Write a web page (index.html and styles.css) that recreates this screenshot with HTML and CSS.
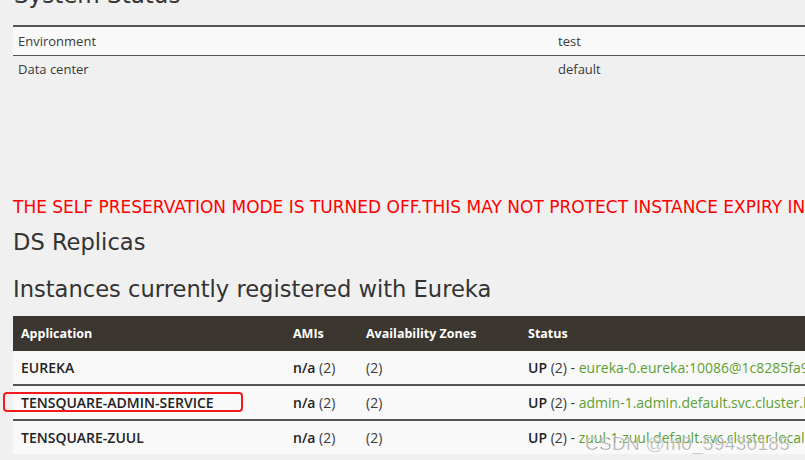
FILE: index.html
```html
<!DOCTYPE html>
<html lang="en">
<head>
  <meta charset="UTF-8" />
  <title>Eureka</title>
  <link rel="stylesheet" href="styles.css">
</head>
<body>

  <h1 class="page-title">System Status</h1>
  <table class="status-table">
    <tr class="odd"><td>Environment</td><td>test</td></tr>
    <tr><td>Data center</td><td>default</td></tr>
  </table>

  <h4 class="warning">THE SELF PRESERVATION MODE IS TURNED OFF.THIS MAY NOT PROTECT INSTANCE EXPIRY IN CASE OF NETWORK/OTHER PROBLEMS.</h4>

  <h1 class="section-title replicas">DS Replicas</h1>
  <h1 class="section-title">Instances currently registered with Eureka</h1>

  <table class="instances">
    <thead>
      <tr>
        <th class="col-app">Application</th>
        <th class="col-ami">AMIs</th>
        <th class="col-zone">Availability Zones</th>
        <th>Status</th>
      </tr>
    </thead>
    <tbody>
      <tr>
        <td><b>EUREKA</b></td>
        <td><b>n/a</b> (2)</td>
        <td>(2)</td>
        <td><b>UP</b> (2) - <a href="#">eureka-0.eureka:10086@1c8285fa9d2a4f2e</a></td>
      </tr>
      <tr>
        <td class="marked"><b>TENSQUARE-ADMIN-SERVICE</b><span class="mark-box"></span></td>
        <td><b>n/a</b> (2)</td>
        <td>(2)</td>
        <td><b>UP</b> (2) - <a href="#">admin-1.admin.default.svc.cluster.local:tensquare-admin</a></td>
      </tr>
      <tr>
        <td><b>TENSQUARE-ZUUL</b></td>
        <td><b>n/a</b> (2)</td>
        <td>(2)</td>
        <td><b>UP</b> (2) - <a href="#">zuul-1.zuul.default.svc.cluster.local:tensquare-zuul</a></td>
      </tr>
    </tbody>
  </table>

  <div class="watermark">CSDN @m0_59430185</div>

</body>
</html>
```

FILE: styles.css
```css
html, body {
  overflow: hidden;
}
body {
  font-family: 'Open Sans', sans-serif;
  font-size: 13px;
  color: #3a3a3a;
  background: #f0f0f0;
  margin: 0;
  padding: 0 0 0 13px;
  width: 1100px;
  position: relative;
}
.page-title,
.section-title {
  font-family: 'DejaVu Sans', sans-serif;
  font-weight: normal;
  color: #333;
}
.page-title {
  font-size: 23px;
  margin: -19px 0 0 1px;
  line-height: 28px;
}
.status-table {
  width: 1080px;
  margin-top: 16px;
  border-collapse: collapse;
  table-layout: fixed;
}
.status-table td {
  padding: 0 5px;
  height: 28px;
  border-top: 2px solid #555;
}
.status-table tr.odd td {
  background: #f9f9f9;
}
.status-table tr:last-child td {
  border-top-width: 1px;
  vertical-align: top;
  padding-top: 4px;
}
.warning {
  font-family: 'DejaVu Sans', sans-serif;
  font-weight: normal;
  color: #ff0000;
  font-size: 17px;
  margin: 109px 0 0;
  white-space: nowrap;
  line-height: 20px;
}
.section-title {
  font-size: 22.6px;
  margin: 0;
  line-height: 26px;
  white-space: nowrap;
}
.replicas {
  margin-top: 12px;
}
.section-title + .section-title {
  margin-top: 21px;
}
.instances {
  width: 1100px;
  margin-top: 14px;
  border-collapse: collapse;
}
.instances th {
  background: #3b3630;
  color: #fff;
  text-align: left;
  font-weight: bold;
  font-size: 12.5px;
  height: 35px;
  padding: 0 8px;
}
.col-app { width: 256px; }
.col-ami { width: 57px; }
.col-zone { width: 146px; }
.instances td {
  background: #f9f9f9;
  height: 33px;
  padding: 0 8px;
  font-size: 14px;
  border-top: 2px solid #555;
  white-space: nowrap;
}
.instances tbody tr:first-child td {
  border-top: 0;
}
.instances b {
  color: #222;
  font-weight: 600;
}
.instances a {
  color: #5d9e34;
  text-decoration: none;
}
.marked {
  position: relative;
}
.mark-box {
  position: absolute;
  left: -10px;
  top: 6px;
  width: 236px;
  height: 16px;
  border: 2px solid #f21b1b;
  border-radius: 4px;
}
.watermark {
  position: absolute;
  left: 585px;
  top: 433px;
  font-family: 'Liberation Sans', sans-serif;
  font-size: 19px;
  color: rgba(130, 130, 130, 0.75);
  -webkit-text-stroke: 0.6px rgba(255, 255, 255, 0.8);
  letter-spacing: 0.3px;
}
```
